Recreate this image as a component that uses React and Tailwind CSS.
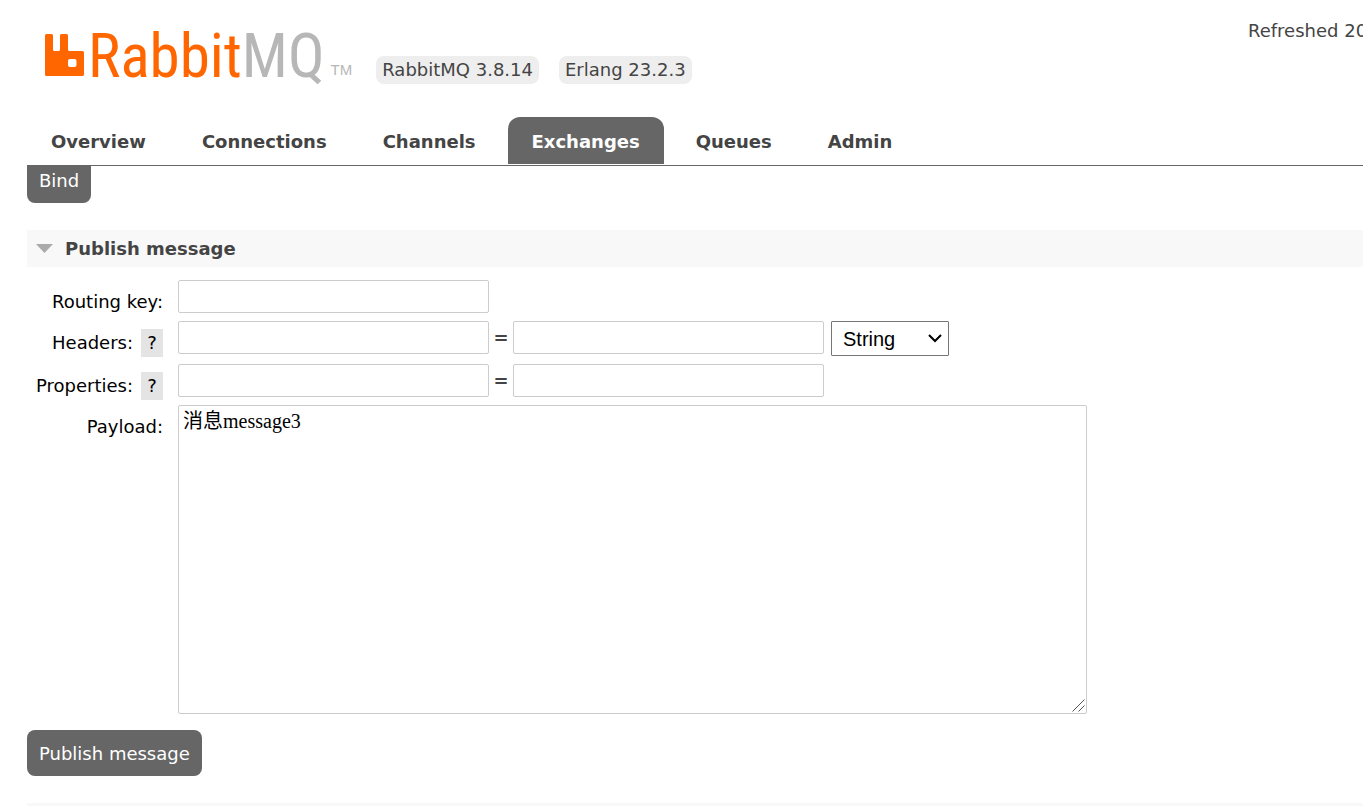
const tabs = ["Overview", "Connections", "Channels", "Exchanges", "Queues", "Admin"];

const inputClass =
  "h-[33px] w-[311px] rounded-xs border border-[#cccccc] bg-white px-1 text-xl text-black";
const buttonClass =
  "h-[46px] shrink-0 rounded-lg bg-[#666666] px-3 pt-0.5 text-lg leading-none text-white";

function Logo() {
  return (
    <a href="#/" aria-label="RabbitMQ" className="flex h-11 items-end">
      <svg width="39" height="42" viewBox="0 0 39 42" className="mb-px" aria-hidden="true">
        <path
          fill="#ff6600"
          fillRule="evenodd"
          d="M1.5 0H6.500Q8 0 8 1.500V15.500Q8 17 9.500 17H13.500Q15 17 15 15.500V1.500Q15 0 16.500 0H21.500Q23 0 23 1.500V15.500Q23 17 24.500 17H37.500Q39 17 39 18.500V40.500Q39 42 37.500 42H1.500Q0 42 0 40.500V1.500Q0 0 1.500 0ZM25 25Q23 25 23 27V31Q23 33 25 33H29.500Q31.500 33 31.500 31V27Q31.500 25 29.500 25Z"
        />
      </svg>
      <span className="ml-1 font-['Roboto_Condensed','Liberation_Sans_Narrow',sans-serif] text-[61px] leading-[42px] text-[#ff6600]">
        Rabbit<span className="text-[#b7b7b7]">MQ</span>
      </span>
      <span className="ml-1.5 font-['Liberation_Sans',sans-serif] text-[15px] leading-[14px] text-[#b7b7b7]">
        TM
      </span>
    </a>
  );
}

function Help({ topic }) {
  return (
    <button type="button" aria-label={"Help: " + topic} className="ml-2 w-[22px] bg-[#e4e4e4] text-center">
      ?
    </button>
  );
}

function FieldLabel({ id, text, help }) {
  return (
    <div className="-mb-2 flex justify-end pt-2 leading-7 text-black">
      <label htmlFor={id}>{text}</label>
      {help && <Help topic={text} />}
    </div>
  );
}

function Equals() {
  return <span className="w-6 text-center font-bold">=</span>;
}

export default function App() {
  return (
    <div className="overflow-hidden bg-white font-['DejaVu_Sans',Verdana,sans-serif] text-lg text-[#444444]">
      <header>
        <div className="flex h-[117px] items-start pl-[45px]">
          <div className="mt-[33px]">
            <Logo />
          </div>
          <ul className="mt-14 ml-6 flex gap-5 leading-7">
            <li className="rounded-lg bg-[#eeeeee] px-1.5">RabbitMQ 3.8.14</li>
            <li className="rounded-lg bg-[#eeeeee] px-1.5">Erlang 23.2.3</li>
          </ul>
          <p className="mt-[17px] ml-auto w-[115px] overflow-hidden leading-7 whitespace-nowrap">
            Refreshed 20
          </p>
        </div>
        <nav className="ml-[27px] flex gap-2 border-b border-[#666666] pb-px">
          {tabs.map((tab) => (
            <a
              key={tab}
              href={"#/" + tab.toLowerCase()}
              className={
                tab === "Exchanges"
                  ? "h-[47px] rounded-t-xl bg-[#666666] px-6 pt-[11px] leading-7 font-bold text-white"
                  : "h-[47px] px-6 pt-[11px] leading-7 font-bold"
              }
            >
              {tab}
            </a>
          ))}
        </nav>
      </header>

      <main className="ml-[27px]">
        <div className="flex h-[37px] items-end overflow-hidden">
          <button type="button" className={buttonClass}>
            Bind
          </button>
        </div>

        <section>
          <h2 className="mt-[27px] flex h-[37px] items-center bg-[#f8f8f8] pl-[9px] font-bold">
            <svg width="17" height="9" viewBox="0 0 17 9" aria-hidden="true">
              <path d="M0 0H17L8.500 9Z" fill="#aaaaaa" />
            </svg>
            <span className="ml-3">Publish message</span>
          </h2>

          <form onSubmit={(e) => e.preventDefault()}>
            <div className="mt-[13px] grid grid-cols-[136px_1fr] items-start gap-x-[15px] gap-y-2">
              <FieldLabel id="routing-key" text="Routing key:" />
              <div className="flex">
                <input id="routing-key" type="text" className={inputClass} />
              </div>

              <FieldLabel id="headers" text="Headers:" help />
              <div className="flex items-start leading-[33px]">
                <input id="headers" type="text" className={inputClass} />
                <Equals />
                <input aria-label="Header value" type="text" className={inputClass} />
                <div className="relative ml-[7px]">
                  <select
                    aria-label="Header type"
                    defaultValue="String"
                    className="block h-[35px] w-[118px] appearance-none rounded-[1px] border border-[#767676] bg-white px-[11px] font-['Liberation_Sans',Arial,sans-serif] text-xl leading-7 text-black"
                  >
                    <option>String</option>
                    <option>Number</option>
                    <option>Boolean</option>
                    <option>List</option>
                  </select>
                  <svg
                    width="14"
                    height="9"
                    viewBox="0 0 14 9"
                    className="pointer-events-none absolute top-[13px] right-[7px]"
                    aria-hidden="true"
                  >
                    <path d="M1 1L7 7L13 1" fill="none" stroke="#000000" strokeWidth="2" />
                  </svg>
                </div>
              </div>

              <FieldLabel id="properties" text="Properties:" help />
              <div className="flex items-start leading-[33px]">
                <input id="properties" type="text" className={inputClass} />
                <Equals />
                <input aria-label="Property value" type="text" className={inputClass} />
              </div>

              <FieldLabel id="payload" text="Payload:" />
              <div className="relative w-[909px]">
                <textarea
                  id="payload"
                  defaultValue="消息message3"
                  className="block h-[309px] w-full resize-none rounded-xs border border-[#cccccc] bg-white px-1 py-[3px] font-['Liberation_Serif','Noto_Sans_CJK_SC',serif] text-xl leading-6 text-black"
                />
                <svg
                  width="13"
                  height="13"
                  viewBox="0 0 13 13"
                  className="pointer-events-none absolute right-[2px] bottom-[2px]"
                  aria-hidden="true"
                >
                  <path d="M0.500 12.500L12.500 0.500M6.500 12.500L12.500 6.500" stroke="#555555" fill="none" />
                </svg>
              </div>
            </div>
            <button type="submit" className={buttonClass + " mt-4 block"}>
              Publish message
            </button>
          </form>
        </section>
        <div className="mt-[27px] h-[3px] bg-[#f8f8f8]" />
      </main>
    </div>
  );
}
